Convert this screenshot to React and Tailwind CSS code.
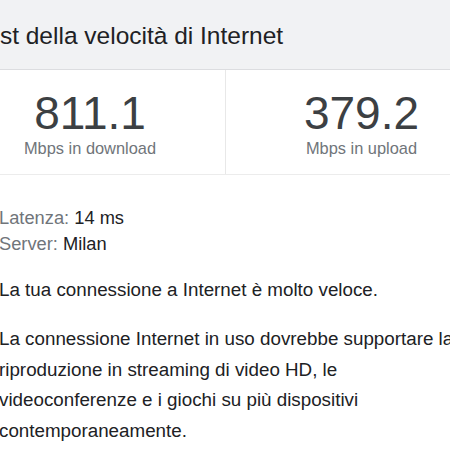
export default function App() {
  return (
    <div className="w-[450px] h-[450px] overflow-hidden bg-white font-['Liberation_Sans',Arial,sans-serif]">
      <div className="ml-[-45px] w-[542px]">
        {/* header */}
        <div className="h-[70px] bg-[#f1f2f4] border-b border-[#dcdde0] pl-[19px] pt-[21px]">
          <h1 className="text-[24.5px] leading-[30px] text-[#202124]">Test della velocità di Internet</h1>
        </div>

        {/* speeds */}
        <div className="grid grid-cols-2 h-[105px] border-b border-[#ececec]">
          <div className="flex flex-col items-center pt-[18px] border-r border-[#e8e8e8]">
            <div className="text-[46px] leading-[50px] text-[#3c4043]">811.1</div>
            <div className="text-[16.4px] leading-[20px] text-[#70757a]">Mbps in download</div>
          </div>
          <div className="flex flex-col items-center pt-[18px]">
            <div className="text-[46px] leading-[50px] text-[#3c4043]">379.2</div>
            <div className="text-[16.4px] leading-[20px] text-[#70757a]">Mbps in upload</div>
          </div>
        </div>

        {/* details */}
        <div className="pl-[44px] pt-[30px] text-[#202124]">
          <div className="text-[18.3px] leading-[26px]">
            <p><span className="text-[#70757a]">Latenza:</span> 14 ms</p>
            <p><span className="text-[#70757a]">Server:</span> Milan</p>
          </div>
          <p className="mt-[18px] text-[18.8px] leading-[30px]">La tua connessione a Internet è molto veloce.</p>
          <p className="mt-[19px] text-[18.8px] leading-[30.5px] w-[458px]">
            La connessione Internet in uso dovrebbe supportare la riproduzione in streaming di video HD, le videoconferenze e i giochi su più dispositivi contemporaneamente.
          </p>
        </div>
      </div>
    </div>
  );
}
